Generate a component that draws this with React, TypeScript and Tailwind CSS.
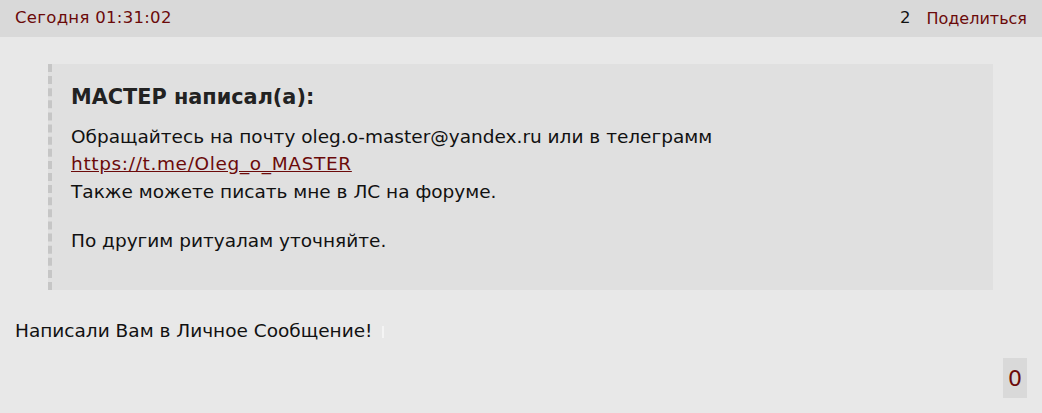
import React from "react";

export default function App() {
  const font = { fontFamily: '"DejaVu Sans", Verdana, sans-serif' };
  return (
    <div className="w-[1042px] h-[413px] bg-[#e8e8e8] text-[#111]" style={font}>
      <div className="h-[37px] bg-[#d9d9d9] flex items-center justify-between pl-[15px] pr-[15px] text-[16.5px]">
        <span className="text-[#6b0a0a] tracking-[0.3px]">Сегодня 01:31:02</span>
        <div className="flex items-center gap-[16px]">
          <span className="text-[#111]">2</span>
          <span className="text-[#6b0a0a] text-[16px]">Поделиться</span>
        </div>
      </div>
      <div className="pl-[48px] pr-[49px] pt-[27px]">
        <div className="bg-[#e0e0e0] border-l-[4px] border-dashed border-[#c6c6c6] pl-[19px] pt-[18px] h-[226px] text-[18.5px] leading-[27px]">
          <div className="font-bold text-[20.8px] text-[#222] leading-[30px] mb-[11px]">МАСТЕР написал(а):</div>
          <div>Обращайтесь на почту oleg.o-master@yandex.ru или в телеграмм</div>
          <div>
            <a className="text-[#6b0a0a] underline tracking-[0.65px]">https://t.me/Oleg_o_MASTER</a>
          </div>
          <div className="mt-[1px]">Также можете писать мне в ЛС на форуме.</div>
          <div className="mt-[22px]">По другим ритуалам уточняйте.</div>
        </div>
      </div>
      <div className="pl-[15px] pt-[27px] text-[18.5px] leading-[27px]">
        Написали Вам в Личное Сообщение!<span className="inline-block w-[2px] h-[12px] bg-[#f4f4f4] ml-[10px] align-middle"></span>
      </div>
      <div className="flex justify-end pr-[15px] pt-[14px]">
        <div className="w-[24px] h-[40px] bg-[#d9d9d9] flex items-center justify-center text-[#6b0a0a] text-[22px]">0</div>
      </div>
    </div>
  );
}
